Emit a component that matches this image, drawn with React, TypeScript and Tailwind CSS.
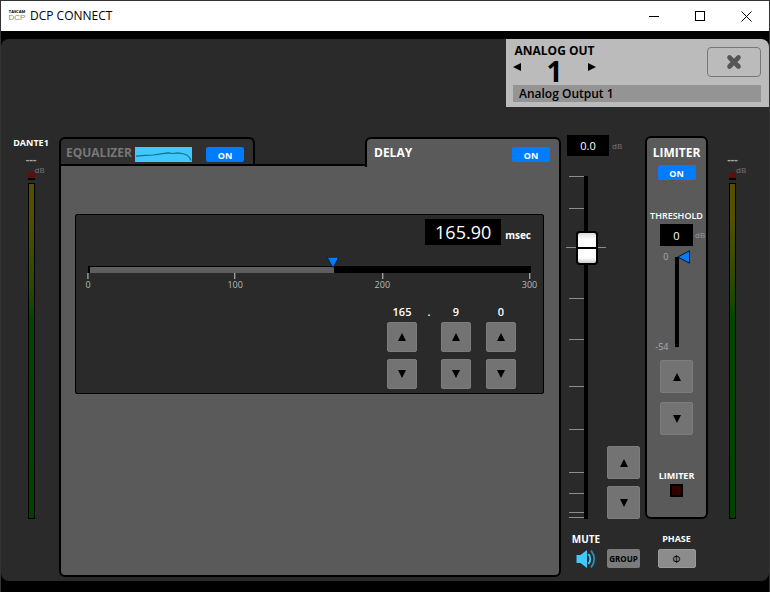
import React from 'react';

type Direction = 'up' | 'down' | 'left' | 'right';

const trianglePoints: Record<Direction, string> = {
  up: '4,0 8,8 0,8',
  down: '0,0 8,0 4,8',
  left: '0,4 8,0 8,8',
  right: '0,0 8,4 0,8',
};

const Triangle: React.FC<{ direction: Direction }> = ({ direction }) => (
  <svg viewBox="0 0 8 8" className="block h-2 w-2" aria-hidden="true">
    <polygon points={trianglePoints[direction]} fill="black" />
  </svg>
);

const StepButton: React.FC<{ direction: 'up' | 'down'; label: string; small?: boolean }> = ({
  direction,
  label,
  small = false,
}) => (
  <button
    aria-label={label}
    className={`flex shrink-0 items-center justify-center rounded-xs border border-[#7c7c7c] bg-[#737373] ${
      small ? 'h-[30px] w-[30px]' : 'h-[33px] w-[33px]'
    }`}
  >
    <Triangle direction={direction} />
  </button>
);

const OnButton: React.FC<{ label: string }> = ({ label }) => (
  <button
    aria-label={label}
    aria-pressed="true"
    className="block h-[15px] w-[38px] shrink-0 rounded-xs bg-[#007dff] pt-0.5 text-[9px] leading-[13px] font-bold text-white"
  >
    ON
  </button>
);

const Meter: React.FC<{ name?: string }> = ({ name }) => (
  <div className="flex flex-1 flex-col items-center pb-[58px]">
    <div className="h-4 text-[9px] leading-4 font-bold text-white">{name}</div>
    <div className="h-[21px] text-[11px] leading-4 font-bold text-[#aaa]">---</div>
    <div className="relative h-2 w-[7px] border-b-2 border-black bg-[#5a100c]">
      <span className="absolute -top-2 left-full text-[8px] leading-3 text-[#777]">dB</span>
    </div>
    <div className="mt-[3px] w-[7px] flex-1 border border-black bg-linear-to-b from-[#545000] from-10% via-[#004600] via-40% to-[#004000]" />
  </div>
);

// Tick positions along the 343 px fader travel
const faderTicks = [0, 32, 122, 163, 210, 253, 296, 317, 336, 341];

const Fader = () => (
  <div className="relative w-[38px] flex-1">
    <div className="mx-auto h-full w-1 bg-black" />
    {faderTicks.map((tick) => (
      <div
        key={tick}
        className="absolute left-0.5 h-px w-[15px] bg-[#8c8c8c]"
        style={{ top: `${(tick / 343) * 100}%` }}
      />
    ))}
    <div className="absolute -right-px -left-px h-px bg-[#8c8c8c]" style={{ top: `${(71 / 343) * 100}%` }} />
    <svg
      viewBox="0 0 22 34"
      className="absolute left-[9px] h-[34px] w-[22px] -translate-y-1/2"
      style={{ top: `${(72 / 343) * 100}%` }}
      aria-hidden="true"
    >
      <defs>
        <linearGradient id="knob" x1="0" y1="0" x2="0" y2="1">
          <stop offset="0" stopColor="#d8d8d8" />
          <stop offset="0.25" stopColor="#ffffff" />
          <stop offset="0.8" stopColor="#ffffff" />
          <stop offset="1" stopColor="#c4c4c4" />
        </linearGradient>
      </defs>
      <rect x="1" y="1" width="20" height="32" rx="3" fill="url(#knob)" stroke="black" strokeWidth="2" />
      <rect x="1" y="16" width="20" height="2" fill="black" />
    </svg>
    <input
      type="range"
      aria-label="Level"
      min={-60}
      max={10}
      defaultValue={0}
      className="absolute inset-0 h-full w-full opacity-0 [direction:rtl] [writing-mode:vertical-lr]"
    />
  </div>
);

const DelaySlider = () => {
  const value = 165.9;
  const percent = (value / 300) * 100;

  return (
    <div className="relative mt-[21px] h-[38px]">
      <div className="h-[7px] border-t border-l-2 border-black bg-black">
        <div className="h-full bg-[#5e5e5e]" style={{ width: `${percent}%` }} />
      </div>
      <svg
        viewBox="0 0 12 11"
        className="absolute -top-[9px] h-[11px] w-3 -translate-x-1/2"
        style={{ left: `${percent}%` }}
        aria-hidden="true"
      >
        <polygon points="0.3,0.3 11.7,0.3 6,10.8" fill="#007dff" stroke="black" strokeWidth="0.5" />
      </svg>
      {[0, 100, 200, 300].map((mark) => (
        <div
          key={mark}
          className="absolute top-[7px] flex -translate-x-1/2 flex-col items-center"
          style={{ left: `${(mark / 301) * 100}%` }}
        >
          <div className="h-1.5 w-px bg-[#ccc]" />
          <span className="text-[9px] leading-3 text-[#bbb]">{mark}</span>
        </div>
      ))}
      <input
        type="range"
        aria-label="Delay time"
        min={0}
        max={300}
        step={0.01}
        defaultValue={value}
        className="absolute inset-x-0 top-0 h-2 w-full opacity-0"
      />
    </div>
  );
};

const DelayDigit: React.FC<{ digit: string; unit: string }> = ({ digit, unit }) => (
  <div className="flex flex-col items-center">
    <span className="mb-0.5 text-[11px] leading-4 font-semibold text-white">{digit}</span>
    <div className="flex flex-col gap-[7px]">
      <StepButton small direction="up" label={`Increase ${unit}`} />
      <StepButton small direction="down" label={`Decrease ${unit}`} />
    </div>
  </div>
);

const DelayPanel = () => (
  <div className="mt-12 mr-[15px] ml-3.5 rounded-xs border border-black bg-[#2a2a2a] px-3 py-1">
    <div className="flex items-center justify-end gap-1">
      <input
        id="delay"
        type="text"
        defaultValue="165.90"
        className="h-[26px] w-[76px] bg-black text-center text-[18px] leading-[26px] font-medium text-white"
      />
      <label htmlFor="delay" className="pt-1.5 text-[10px] leading-4 font-bold text-white">
        msec
      </label>
    </div>
    <DelaySlider />
    <div className="flex justify-end pr-[15px]">
      <DelayDigit digit="165" unit="milliseconds" />
      <span className="w-6 text-center text-[11px] leading-4 font-semibold text-white">.</span>
      <DelayDigit digit="9" unit="tenths" />
      <div className="ml-[15px]">
        <DelayDigit digit="0" unit="hundredths" />
      </div>
    </div>
  </div>
);

const TabArea = () => (
  <div className="flex flex-1 flex-col pt-0.5">
    <div className="flex justify-between">
      <div className="flex h-7 w-[196px] items-start rounded-t-md border-2 border-b-0 border-black bg-[#303030] pt-2 pr-[9px] pl-[5px]">
        <button className="text-[12px] leading-3 font-bold text-[#777]">EQUALIZER</button>
        <svg viewBox="0 0 57 15" className="mr-3.5 ml-auto h-[15px] w-[57px] bg-[#40c8ff]" aria-hidden="true">
          <path
            d="M1 9.2 L10 8.3 L18 8 L26 6.8 L33 5.8 L38 6.5 L43 5.8 L49 7 Q54 8 56 13.5"
            fill="none"
            stroke="#176f91"
            strokeWidth="1.2"
          />
        </svg>
        <OnButton label="Equalizer on" />
      </div>
      <div className="z-10 -mb-0.5 flex h-[30px] w-[196px] items-start justify-between rounded-t-md border-2 border-b-0 border-black bg-[#5a5a5a] pt-2 pr-[9px] pl-[7px]">
        <button className="text-[12px] leading-3 font-bold text-white">DELAY</button>
        <OnButton label="Delay on" />
      </div>
    </div>
    <div className="-mt-px flex-1 rounded-b-md border-2 border-black bg-[#5a5a5a]">
      <DelayPanel />
    </div>
  </div>
);

const SpeakerIcon = () => (
  <svg viewBox="0 0 20 20" className="h-5 w-5" aria-hidden="true">
    <path d="M0.5 6 h4 l6.5 -5 v18 l-6.5 -5 h-4 z" fill="#40c8ff" />
    <path d="M12.5 5 q3.5 5 0 10" fill="none" stroke="#40c8ff" strokeWidth="1.8" />
    <path d="M15 1.5 q6.5 8.5 0 17" fill="none" stroke="#2b8fb8" strokeWidth="1.8" />
  </svg>
);

const FaderColumn = () => (
  <div className="ml-1.5 flex w-[78px] flex-col">
    <div className="flex items-center gap-[3px]">
      <input
        id="level"
        type="text"
        defaultValue="0.0"
        className="h-[21px] w-[42px] bg-black text-center text-[11px] text-white"
      />
      <label htmlFor="level" className="text-[8px] leading-3 text-[#777]">
        dB
      </label>
    </div>
    <div className="mt-5 flex flex-1 gap-0.5">
      <Fader />
      <div className="flex flex-col justify-end gap-[7px] pr-[5px]">
        <StepButton direction="up" label="Level up" />
        <StepButton direction="down" label="Level down" />
      </div>
    </div>
    <div className="flex h-[58px] gap-0.5 pt-3">
      <button className="flex w-[38px] flex-col items-center gap-0.5 text-[10px] leading-4 font-bold text-white">
        MUTE
        <SpeakerIcon />
      </button>
      <button className="mt-[18px] h-[19px] w-[33px] rounded-xs bg-[#7b7b7b] text-center text-[8px] leading-[19px] font-bold text-black">
        GROUP
      </button>
    </div>
  </div>
);

const LimiterColumn = () => (
  <div className="flex w-[63px] flex-col pt-px">
    <div className="flex flex-1 flex-col items-center rounded-md border-2 border-black bg-[#5a5a5a] pt-1.5">
      <h2 className="text-[12px] leading-[18px] font-bold text-white">LIMITER</h2>
      <div className="mt-[3px]">
        <OnButton label="Limiter on" />
      </div>
      <label htmlFor="threshold" className="mt-7 text-[9px] leading-4 font-semibold text-white">
        THRESHOLD
      </label>
      <div className="relative">
        <input
          id="threshold"
          type="text"
          defaultValue="0"
          className="block h-[22px] w-[33px] bg-black text-center text-[11px] font-medium text-white"
        />
        <span className="absolute top-[5px] left-full ml-0.5 text-[8px] leading-3 text-[#999]">dB</span>
      </div>
      <div className="relative mt-[11px] h-[90px] w-1 bg-black">
        <span className="absolute -top-1.5 right-full mr-1.5 text-[9px] leading-3 text-[#aaa]">0</span>
        <span className="absolute right-full -bottom-1.5 mr-1.5 text-[9px] leading-3 text-[#aaa]">-54</span>
        <svg viewBox="0 0 13 14" className="absolute -top-[7px] left-0.5 h-3.5 w-[13px]" aria-hidden="true">
          <polygon points="0.8,7 12.5,0.8 12.5,13.2" fill="#007dff" stroke="black" strokeWidth="0.8" />
        </svg>
        <input
          type="range"
          aria-label="Threshold"
          min={-54}
          max={0}
          defaultValue={0}
          className="absolute inset-y-0 left-0 h-full w-3 opacity-0 [direction:rtl] [writing-mode:vertical-lr]"
        />
      </div>
      <div className="mt-[13px] flex flex-col gap-[9px]">
        <StepButton direction="up" label="Threshold up" />
        <StepButton direction="down" label="Threshold down" />
      </div>
      <div className="mt-auto mb-5 flex flex-col items-center">
        <span className="text-[9px] leading-4 font-bold text-white">LIMITER</span>
        <div className="h-[13px] w-[13px] border-2 border-black bg-[#330000]" />
      </div>
    </div>
    <div className="flex h-[58px] flex-col items-center gap-0.5 pt-3">
      <label htmlFor="phase" className="text-[9px] leading-4 font-bold text-white">
        PHASE
      </label>
      <button
        id="phase"
        className="h-[19px] w-[38px] rounded-xs border border-[#999] bg-[#8c8c8c] text-[10px] leading-4 text-black"
      >
        Φ
      </button>
    </div>
  </div>
);

const TitleBar = () => (
  <div className="flex h-[30px] items-center bg-white pl-2">
    <div className="flex w-4 flex-col items-center text-[#888]">
      <span className="text-[4px] leading-[4px] font-bold text-black">TASCAM</span>
      <span className="font-['Liberation_Sans'] text-[8px] leading-2">DCP</span>
    </div>
    <h1 className="ml-[5px] flex-1 text-[12px] leading-4 text-black">DCP CONNECT</h1>
    <button aria-label="Minimize" className="flex h-full w-[46px] items-center justify-center">
      <svg viewBox="0 0 11 11" className="h-[11px] w-[11px]">
        <path d="M0 5.5 H10" stroke="black" />
      </svg>
    </button>
    <button aria-label="Maximize" className="flex h-full w-[46px] items-center justify-center">
      <svg viewBox="0 0 11 11" className="h-[11px] w-[11px]">
        <rect x="0.5" y="0.5" width="9" height="9" fill="none" stroke="black" />
      </svg>
    </button>
    <button aria-label="Close window" className="flex h-full w-[46px] items-center justify-center">
      <svg viewBox="0 0 11 11" className="h-[11px] w-[11px]">
        <path d="M0.5 0.5 L10.5 10.5 M10.5 0.5 L0.5 10.5" stroke="black" />
      </svg>
    </button>
  </div>
);

const ChannelHeader = () => (
  <div className="w-[263px] rounded-tr-lg bg-[#bbb] pt-1 pr-2 pb-[5px] pl-[7px]">
    <div className="flex justify-between">
      <div className="w-[83px]">
        <div className="text-center text-[12px] leading-4 font-bold text-black">ANALOG OUT</div>
        <div className="flex h-[26px] justify-between">
          <button aria-label="Previous channel" className="flex h-4 items-center">
            <Triangle direction="left" />
          </button>
          <span className="text-[28px] leading-6 font-bold text-black">1</span>
          <button aria-label="Next channel" className="flex h-4 items-center">
            <Triangle direction="right" />
          </button>
        </div>
      </div>
      <button
        aria-label="Close channel"
        className="mt-1 flex h-[30px] w-[54px] items-center justify-center rounded-sm border border-[#777]"
      >
        <svg viewBox="0 0 16 16" className="h-4 w-4" aria-hidden="true">
          <path
            d="M3.5 3.5 L12.5 12.5 M12.5 3.5 L3.5 12.5"
            stroke="#555"
            strokeWidth="4.6"
            strokeLinecap="round"
          />
        </svg>
      </button>
    </div>
    <input
      type="text"
      aria-label="Channel name"
      defaultValue="Analog Output 1"
      className="block h-[17px] w-full bg-[#949494] px-1.5 text-[12px] leading-4 font-semibold text-black"
    />
  </div>
);

const App: React.FC = () => (
  <div className="flex min-h-screen flex-col border-x border-t border-[#333] bg-black font-['Open_Sans','Noto_Sans',sans-serif]">
    <TitleBar />
    <main className="mt-2 mb-[11px] flex flex-1 flex-col rounded-lg bg-[#2a2a2a]">
      <div className="flex justify-end">
        <ChannelHeader />
      </div>
      <div className="flex flex-1 pt-7 pb-1">
        <div className="flex w-[58px] pl-0.5">
          <Meter name="DANTE1" />
        </div>
        <TabArea />
        <FaderColumn />
        <LimiterColumn />
        <div className="flex w-[61px] pr-3">
          <Meter />
        </div>
      </div>
    </main>
  </div>
);

export default App;
